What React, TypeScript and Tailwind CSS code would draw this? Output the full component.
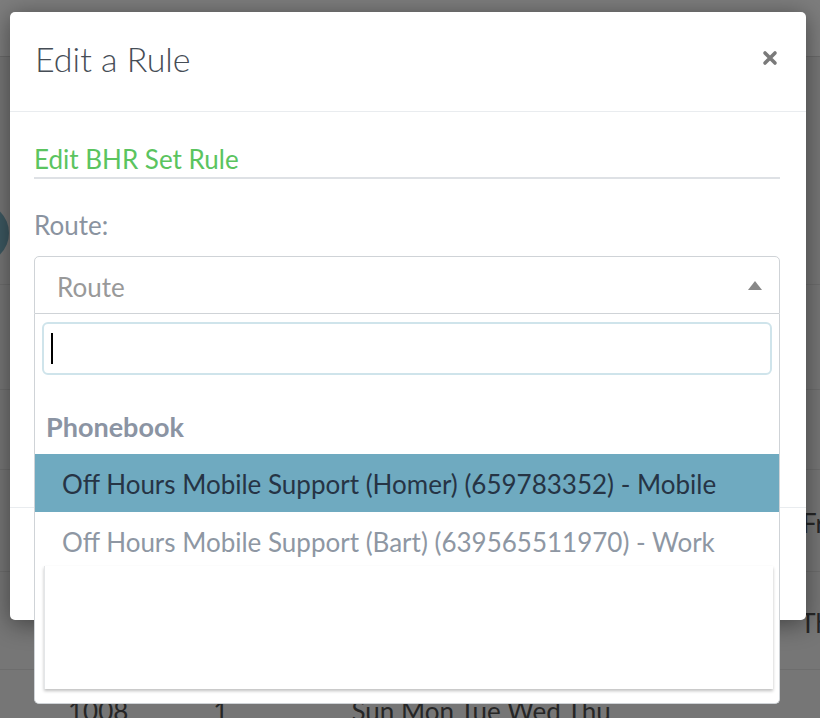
import React from "react";

function CloseIcon() {
  return (
    <svg width="16" height="16" viewBox="0 0 16 16" aria-hidden="true">
      <path d="M3 3 L13 13 M13 3 L3 13" stroke="#7a7a7a" strokeWidth="3.6" strokeLinecap="round" fill="none" />
    </svg>
  );
}

function Background() {
  return (
    <div className="flex flex-col w-full text-[#262626] text-[26px]">
      <div className="h-[57px] bg-[#7d7d7d] border-b border-[#6a6a6a]" />
      <div className="h-[228px] border-b border-[#6d6d6d] pt-[146px] flex">
        <div className="-ml-[51px] w-[60px] h-[60px] rounded-full bg-[#3c5861]" />
      </div>
      <div className="h-[105px] border-b border-[#6d6d6d]" />
      <div className="h-[80px] border-b border-[#6d6d6d]" />
      <div className="h-[102px] border-b border-[#6d6d6d] flex justify-end items-center pt-[4px]">
        <span className="mr-[-5px] leading-none">Fr</span>
      </div>
      <div className="h-[98px] border-b border-[#6d6d6d] flex justify-end items-center pt-[4px]">
        <span className="mr-[-10px] leading-none">Th</span>
      </div>
      <div className="h-[60px] flex items-start pt-[28px] leading-none">
        <span className="ml-[68px]">1008</span>
        <span className="ml-[85px]">1</span>
        <span className="ml-[123px] whitespace-nowrap">Sun Mon Tue Wed Thu</span>
      </div>
    </div>
  );
}

function RouteSelect() {
  return (
    <div className="relative mt-[18px]">
      <div className="h-[58px] border border-[#cfd3d7] rounded-t-[5px] flex items-center justify-between pl-[22px] pr-[17px] bg-white">
        <span className="text-[26px] text-[#999999] pt-[5px]">Route</span>
        <svg width="14" height="9" viewBox="0 0 14 9" aria-hidden="true">
          <path d="M0 9 L7 0 L14 9 Z" fill="#888888" />
        </svg>
      </div>
      <div className="absolute left-0 right-0 top-full h-[390px] bg-white border-x border-b border-[#cfd3d7] rounded-b-[5px] flex flex-col overflow-hidden z-10">
        <div className="mx-[7px] mt-[8px] h-[53px] border-2 border-[#cfe4eb] rounded-[6px] flex items-center pl-[7px] shrink-0">
          <div className="w-[2px] h-[31px] bg-black" />
        </div>
        <div className="h-[23px] shrink-0" />
        <div className="h-[56px] flex items-center pl-[11px] pt-[2px] text-[27px] font-bold text-[#8b94a3] shrink-0">
          Phonebook
        </div>
        <div className="h-[58px] flex items-center pl-[27px] pt-[3px] bg-[#6faac0] text-[26px] text-[#263445] shrink-0 whitespace-nowrap">
          Off Hours Mobile Support (Homer) (659783352) - Mobile
        </div>
        <div className="h-[58px] flex items-center pl-[27px] pt-[3px] text-[26px] text-[#8e97a3] shrink-0 whitespace-nowrap">
          Off Hours Mobile Support (Bart) (639565511970) - Work
        </div>
        <div className="-mt-[4px] ml-[9px] mr-[6px] h-[123px] bg-white border-l border-[#e4e6e8] shadow-[0_2px_3px_rgba(0,0,0,0.25)] shrink-0" />
      </div>
    </div>
  );
}

export default function App() {
  return (
    <div className="relative w-[820px] h-[718px] overflow-hidden bg-[#767676] font-['Lato',sans-serif]">
      <Background />
      <div className="absolute left-[10px] top-[12px] w-[796px] h-[608px] bg-white rounded-[5px] shadow-[0_4px_24px_rgba(0,0,0,0.45)] flex flex-col z-10">
        <div className="h-[100px] shrink-0 flex items-center justify-between pl-[25px] pr-[28px] border-b border-[#e9ecef]">
          <h2 className="text-[34px] font-light text-[#464d56] leading-none -mt-[5px]">Edit a Rule</h2>
          <div className="-mt-[8px]">
            <CloseIcon />
          </div>
        </div>
        <div className="pl-[24px] pr-[26px] flex flex-col">
          <div className="h-[67px] pt-[32px] border-b-2 border-[#dee1e5] text-[26px] text-[#5bc45f] leading-[30px]">
            Edit BHR Set Rule
          </div>
          <div className="mt-[33px] text-[26px] leading-[26px] text-[#8a93a0]">Route:</div>
          <RouteSelect />
        </div>
        <div className="mt-auto h-[113px] border-t border-[#e9ecef] shrink-0" />
      </div>
    </div>
  );
}
